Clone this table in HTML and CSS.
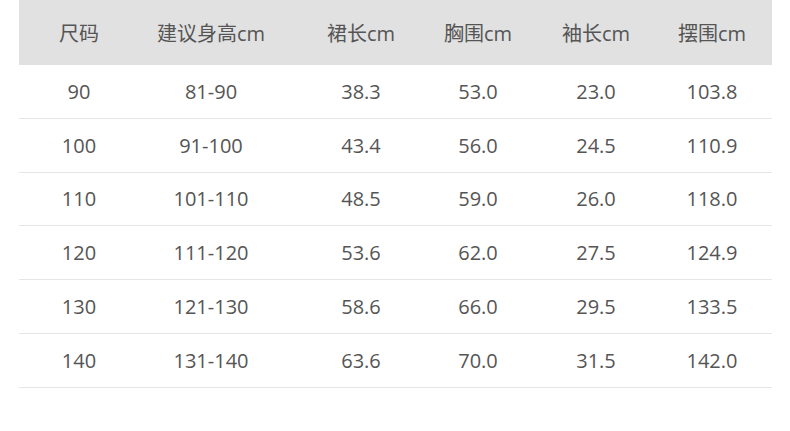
FILE: index.html
```html
<!DOCTYPE html>
<html lang="zh">
<head>
<meta charset="utf-8">
<link rel="stylesheet" href="styles.css">
</head>
<body>
<table class="size-table">
  <colgroup>
    <col class="c1"><col class="c2"><col class="c3"><col class="c4"><col class="c5"><col class="c6">
  </colgroup>
  <thead>
    <tr><th>尺码</th><th>建议身高cm</th><th>裙长cm</th><th>胸围cm</th><th>袖长cm</th><th class="last">摆围cm</th></tr>
  </thead>
  <tbody>
    <tr><td>90</td><td>81-90</td><td>38.3</td><td>53.0</td><td>23.0</td><td class="last">103.8</td></tr>
    <tr><td>100</td><td>91-100</td><td>43.4</td><td>56.0</td><td>24.5</td><td class="last">110.9</td></tr>
    <tr><td>110</td><td>101-110</td><td>48.5</td><td>59.0</td><td>26.0</td><td class="last">118.0</td></tr>
    <tr><td>120</td><td>111-120</td><td>53.6</td><td>62.0</td><td>27.5</td><td class="last">124.9</td></tr>
    <tr><td>130</td><td>121-130</td><td>58.6</td><td>66.0</td><td>29.5</td><td class="last">133.5</td></tr>
    <tr><td>140</td><td>131-140</td><td>63.6</td><td>70.0</td><td>31.5</td><td class="last">142.0</td></tr>
  </tbody>
</table>
</body>
</html>
```
FILE: styles.css
```css
html, body {
  margin: 0;
  padding: 0;
  background: #fff;
}
.size-table {
  margin-left: 19px;
  width: 753px;
  border-collapse: collapse;
  table-layout: fixed;
  font-family: "Open Sans", "Noto Sans CJK SC", sans-serif;
  font-size: 20px;
  color: #555;
}
.c1 { width: 120px; }
.c2 { width: 144px; }
.c3 { width: 156px; }
.c4 { width: 78px; }
.c5 { width: 158px; }
.c6 { width: 97px; }
.size-table th {
  background: #e1e1e1;
  font-weight: normal;
  height: 65px;
  padding: 0;
  text-align: center;
  vertical-align: middle;
}
.size-table td {
  height: 52.8px;
  padding: 0;
  text-align: center;
  vertical-align: middle;
  border-bottom: 1px solid #e6e6e6;
}
.size-table .last {
  padding-right: 23px;
}
```
